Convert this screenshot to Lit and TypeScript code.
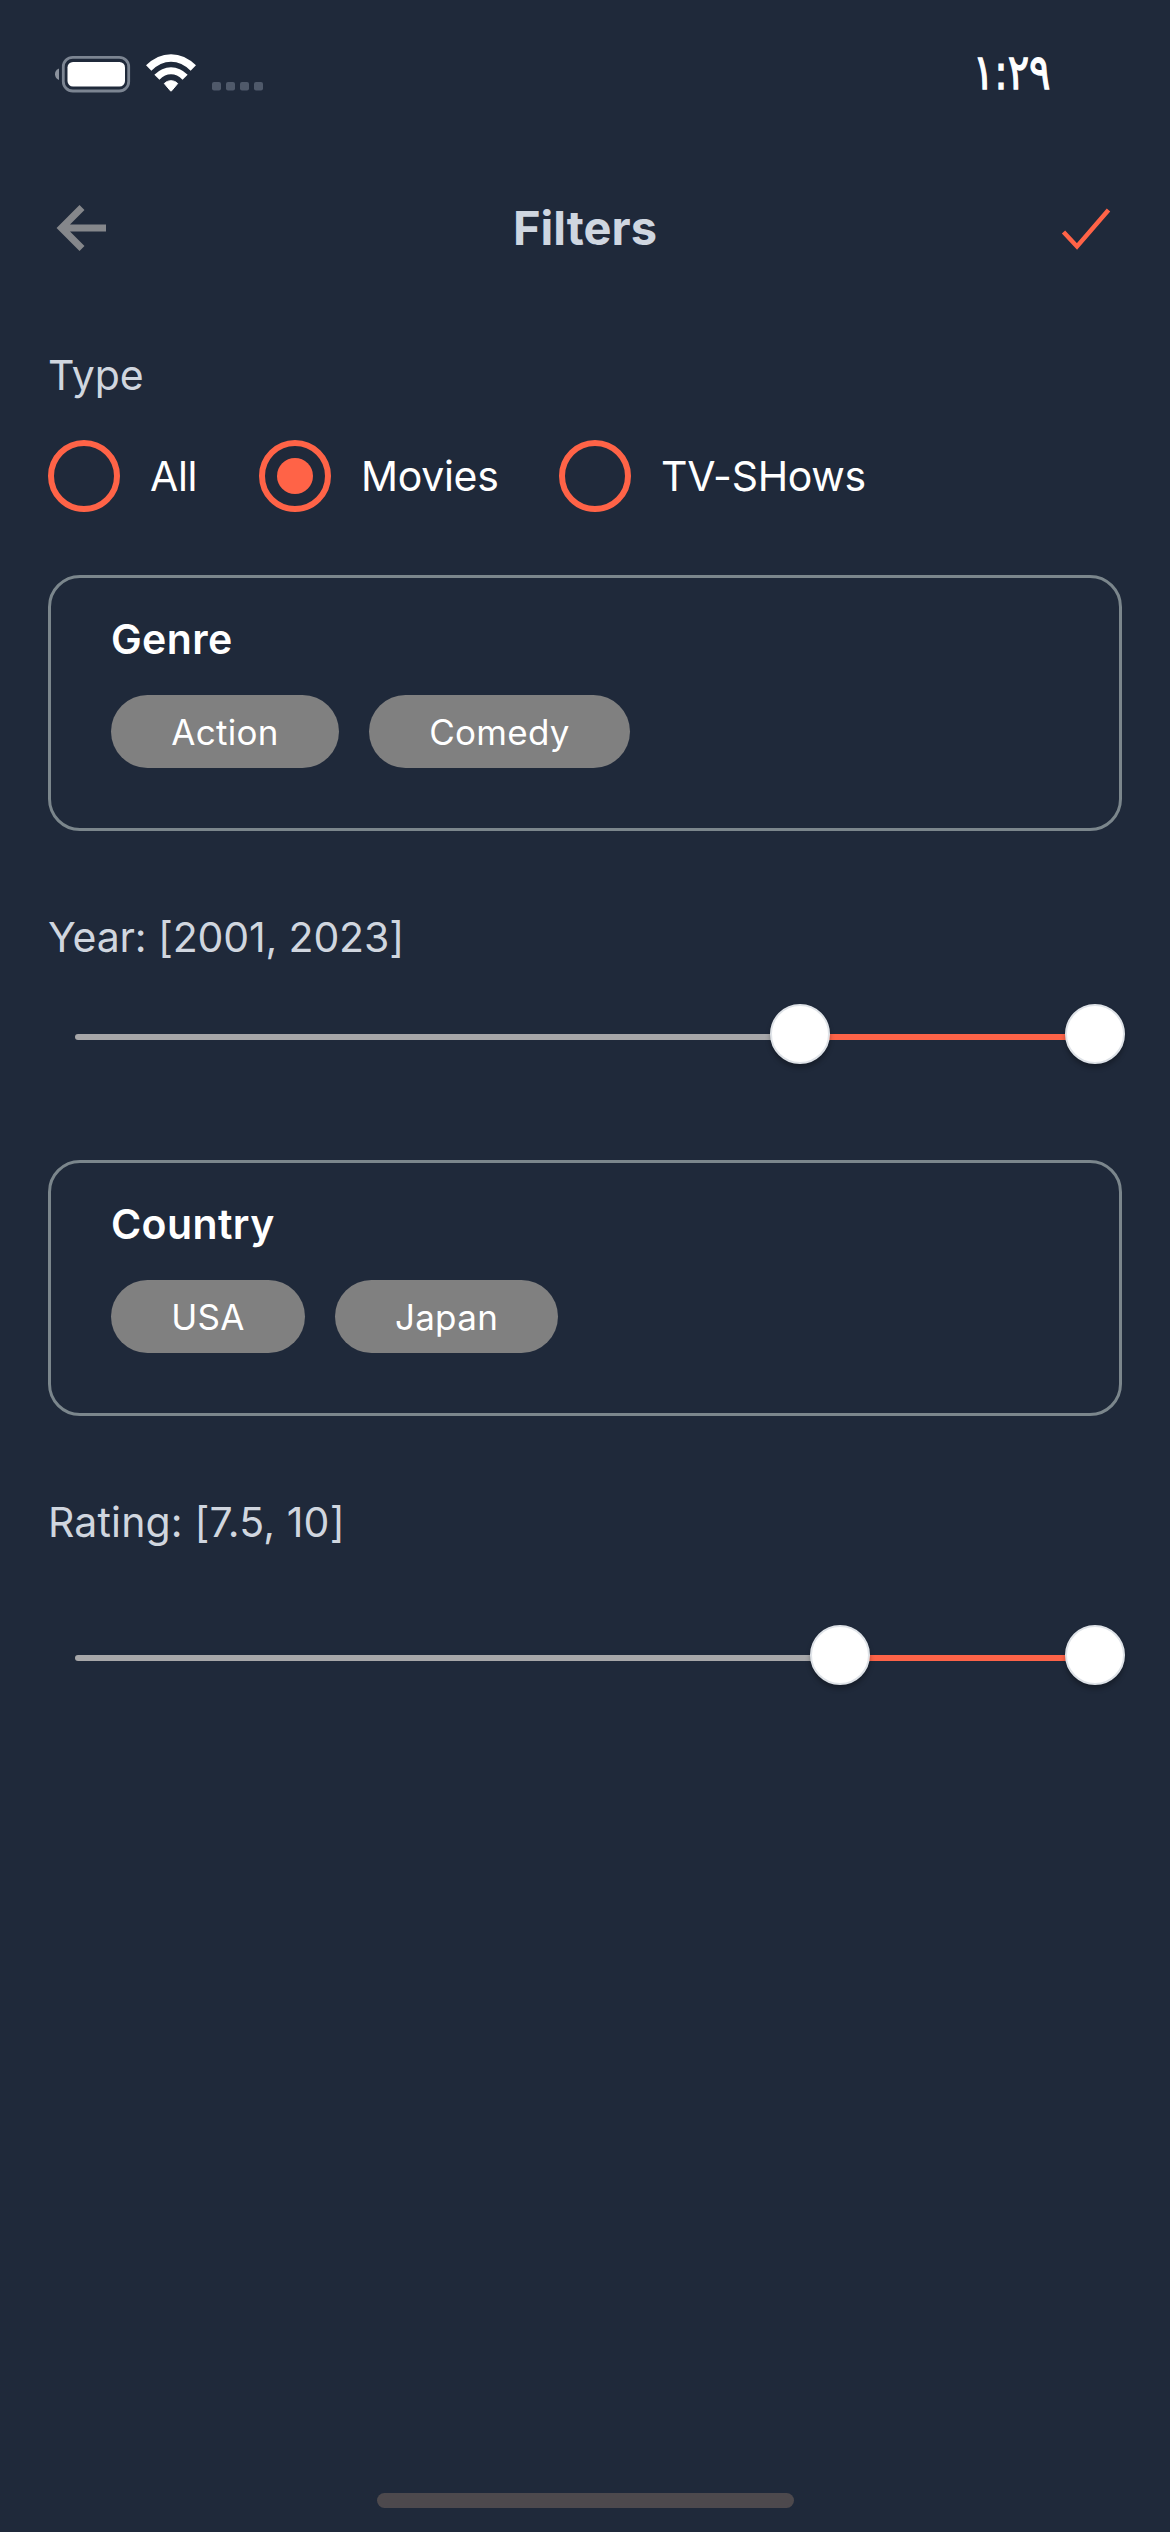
import { LitElement, html, css, svg } from "lit";
import { customElement, property } from "lit/decorators.js";

@customElement("range-slider")
class RangeSlider extends LitElement {
  @property({ type: Number }) low = 0;
  @property({ type: Number }) high = 0;

  static styles = css`
    :host { display: block; height: 60px; margin: 0 27px; }
    .rail { position: relative; height: 60px; display: flex; align-items: center; }
    .track { width: 100%; height: 6px; margin-top: 6px; border-radius: 3px; background: #a7a7a9; display: flex; overflow: hidden; }
    .fill { height: 6px; background: #fd6348; }
    .thumb {
      position: absolute; top: 0; width: 60px; height: 60px; margin-left: -30px; box-sizing: border-box;
      border-radius: 50%; background: #fff; border: 2px solid #dfe3e8; box-shadow: 0 4px 5px rgba(0, 0, 0, 0.28);
    }
  `;

  render() {
    const total = 1020;
    const pct = (v: number) => `${(v / total) * 100}%`;
    return html`<div class="rail">
      <div class="track">
        <div style="width:${pct(this.low)}"></div>
        <div class="fill" style="width:${pct(this.high - this.low)}"></div>
      </div>
      <div class="thumb" style="left:${pct(this.low)}"></div>
      <div class="thumb" style="left:${pct(this.high)}"></div>
    </div>`;
  }
}

@customElement("app-root")
class AppRoot extends LitElement {
  static styles = css`
    :host { display: block; }
    .screen {
      width: 1170px; height: 2532px; box-sizing: border-box; background: #1f293a; color: #fff;
      font-family: Inter, "Liberation Sans", sans-serif; font-size: 41px; line-height: 60px;
      display: flex; flex-direction: column; white-space: nowrap; overflow: hidden;
    }
    .status {
      height: 153px; box-sizing: border-box; flex: none; padding: 45px 119px 0 54px;
      display: flex; justify-content: space-between;
    }
    .time {
      font-family: "DejaVu Sans", sans-serif; font-size: 46px; line-height: 54px; height: 54px;
      -webkit-text-stroke: 1.2px #fff; transform: scale(0.87, 1.06); transform-origin: right center;
    }
    svg { display: block; }
    .header {
      height: 150px; box-sizing: border-box; flex: none; padding: 0 54px;
      display: grid; grid-template-columns: 60px 1fr 60px; align-items: center;
    }
    .title { font-size: 47px; font-weight: 700; color: #cfd6e0; text-align: center; }
    .content { padding: 42px 48px 0; flex: 1; box-sizing: border-box; }
    .label { color: #d0d6df; height: 60px; letter-spacing: -0.1px; }
    .radios { display: flex; margin-top: 35px; }
    .option { display: flex; align-items: center; gap: 30px; height: 72px; letter-spacing: -0.3px; }
    .radio { width: 72px; height: 72px; box-sizing: border-box; border: 6px solid #ff6347; border-radius: 50%; display: grid; place-items: center; }
    .dot { width: 36px; height: 36px; border-radius: 50%; background: #ff6347; }
    .all { width: 211px; }
    .movies { width: 300px; }
    .card { height: 256px; box-sizing: border-box; border: 3px solid #7b868c; border-radius: 32px; padding: 31px 60px 0; }
    .genre { margin-top: 63px; }
    .card-title { font-weight: 600; height: 60px; letter-spacing: 0.4px; }
    .chips { display: flex; gap: 30px; margin-top: 26px; }
    .chip {
      height: 73px; box-sizing: border-box; border-radius: 37px; background: #808080; font-size: 35px; line-height: 75px;
      text-align: center; letter-spacing: 0.3px;
    }
    .action { width: 228px; }
    .comedy { width: 261px; }
    .usa { width: 194px; }
    .japan { width: 223px; }
    .year { margin: 76px 0 37px; letter-spacing: -0.15px; }
    .country { margin-top: 96px; }
    .rating { margin: 76px 0 73px; letter-spacing: 0.15px; }
    .home { width: 417px; height: 15px; border-radius: 8px; background: #4d494d; margin: 0 auto 24px; }
  `;

  private statusIcons() {
    return svg`<svg width="212" height="54" viewBox="54 45 212 54">
      <path d="M59 68.500 V80 C56.300 79 55 76.800 55 74.200 C55 71.600 56.300 69.500 59 68.500Z" fill="#8a919c"/>
      <rect x="63.300" y="57.300" width="65.400" height="33.700" rx="9.500" fill="none" stroke="#7c8592" stroke-width="2.800"/>
      <rect x="67.500" y="62" width="57.500" height="24.500" rx="5.500" fill="#fff"/>
      <g fill="none" stroke="#fff">
        <path d="M148.700 68 C162 54.500 180 54.500 193.300 68" stroke-width="7.500"/>
        <path d="M156.900 77.200 C165.500 68.600 176.500 68.600 185.100 77.200" stroke-width="7.200"/>
      </g>
      <path d="M164.300 83.500 C168 79.800 174 79.800 177.700 83.500 L171.600 90.800 Q171 91.500 170.400 90.800Z" fill="#fff" stroke="#fff" stroke-width="1"/>
      <g fill="#4f596a">
        <rect x="212" y="82" width="9" height="8.500" rx="2"/>
        <rect x="226" y="82" width="9" height="8.500" rx="2"/>
        <rect x="240" y="82" width="9" height="8.500" rx="2"/>
        <rect x="254" y="82" width="9" height="8.500" rx="2"/>
      </g>
    </svg>`;
  }

  render() {
    return html`<div class="screen">
      <div class="status">
        ${this.statusIcons()}
        <div class="time">١:٢٩</div>
      </div>
      <div class="header">
        <svg width="60" height="60" viewBox="54 198 60 60" fill="none" stroke="#85878b" stroke-width="7">
          <path d="M82 207.500 L61.500 228 L82 248.500 M61 228 H106"/>
        </svg>
        <div class="title">Filters</div>
        <svg width="60" height="60" viewBox="1056 198 60 60" fill="none" stroke="#ff6347" stroke-width="4.500">
          <path d="M1063.500 232 L1077 246.500 L1108.500 210"/>
        </svg>
      </div>
      <div class="content">
        <div class="label">Type</div>
        <div class="radios">
          <div class="option all"><span class="radio"></span><span>All</span></div>
          <div class="option movies"><span class="radio"><span class="dot"></span></span><span>Movies</span></div>
          <div class="option"><span class="radio"></span><span>TV-SHows</span></div>
        </div>
        <div class="card genre">
          <div class="card-title">Genre</div>
          <div class="chips"><div class="chip action">Action</div><div class="chip comedy">Comedy</div></div>
        </div>
        <div class="label year">Year: [2001, 2023]</div>
        <range-slider low="725" high="1020"></range-slider>
        <div class="card country">
          <div class="card-title">Country</div>
          <div class="chips"><div class="chip usa">USA</div><div class="chip japan">Japan</div></div>
        </div>
        <div class="label rating">Rating: [7.5, 10]</div>
        <range-slider low="765" high="1020"></range-slider>
      </div>
      <div class="home"></div>
    </div>`;
  }
}
